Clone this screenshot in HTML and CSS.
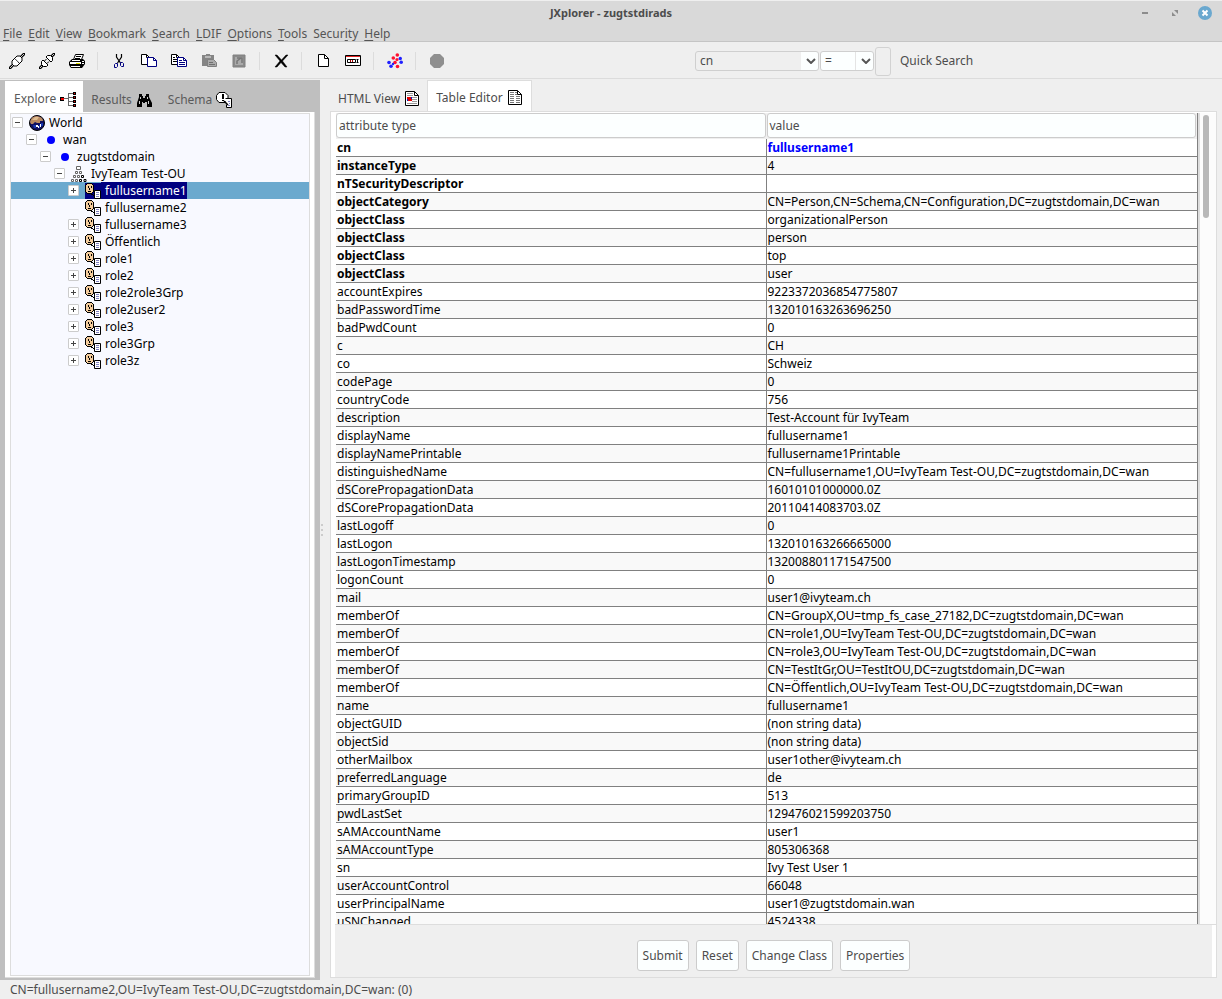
FILE: index.html
```html
<!DOCTYPE html>
<html lang="en">
<head>
<meta charset="utf-8">
<title>JXplorer - zugtstdirads</title>
<link rel="stylesheet" href="styles.css">
</head>
<body>
<svg class="sprites" aria-hidden="true">
  <symbol id="person" viewBox="0 0 16 16">
    <path d="M2 0h5v1h1v1h1v7h-1v1h-1v1h-5v-1h-1v-1h-1v-7h1v-1h1z" fill="#000"/>
    <path d="M2 1h5v1h1v7h-1v1h-5v-1h-1v-7h1z" fill="#f4cc9c"/>
    <path d="M3 3h1v2h-1zM6 3h1v2h-1zM4 5h1v2h-1zM3 8h3v1h-3zM6 11h2v1h-2zM8 12h1v1h-1z" fill="#000"/>
    <path d="M9.500 7.500h6v8h-6z" fill="#fff" stroke="#000"/>
    <path d="M11 9h3v1h-3zM11 11h3v1h-3zM11 13h3v1h-3z" fill="#8080c0"/>
  </symbol>
  <symbol id="globe" viewBox="0 0 16 16">
    <circle cx="8" cy="8" r="7.500" fill="#101060" stroke="#000"/>
    <path d="M1 7Q2 1 8 1Q14 2 14 6H11V8H8L6 7L4 9H2z" fill="#b98a62"/>
    <path d="M3 5L6 2H10L8 5z" fill="#e0bc90"/>
    <path d="M7 10h2v1h1v2h-1v-1h-2zM11 9h1v3h-1z" fill="#fff"/>
    <path d="M4 10h3v3h-2zM10 10h1v3h-1zM12 8h2v3h-2z" fill="#1838b0"/>
  </symbol>
  <symbol id="dot" viewBox="0 0 16 16"><circle cx="8" cy="8" r="4" fill="#00f"/></symbol>
  <symbol id="unit" viewBox="0 0 16 16">
    <g fill="#fff" stroke="#666"><path d="M5.500.5h4v3h-4zM4.500 5.500h2v2h-2zM8.500 5.500h2v2h-2zM2.500 9.500h2v2h-2zM6.500 9.500h2v2h-2zM.5 13.500h2v2h-2zM4.500 13.500h2v2h-2z"/></g>
    <g fill="#fff" stroke="#000"><path d="M10.500 9.500h2v2h-2zM13 13.500h2v2h-2zM8.500 13.500h2v2h-2z"/></g>
  </symbol>
  <symbol id="copy" viewBox="0 0 16 16">
    <path d="M.5 1.500h5l3 3v7h-8z" fill="#fff" stroke="#000"/><path d="M5.500 1.500v3h3" fill="none" stroke="#000"/>
    <path d="M6.500 4.500h6l3 3v6h-9z" fill="#fff" stroke="#000080"/><path d="M12.500 4.500v3h3" fill="none" stroke="#000080"/>
  </symbol>
</svg>

<header class="titlebar">
  <h1>JXplorer - zugtstdirads</h1>
  <div class="window-buttons">
    <button aria-label="Minimize"><svg viewBox="0 0 14 14"><path d="M4 6h6v2H4z" fill="#8c8c8c"/></svg></button>
    <button aria-label="Restore"><svg viewBox="0 0 14 14"><path d="M6 4h4v4zM4 6l4 4H4z" fill="#8c8c8c"/></svg></button>
    <button aria-label="Close"><svg viewBox="0 0 14 14"><circle cx="7" cy="7" r="7" fill="#6aa8cf"/><path d="M4.500 4.500l5 5M9.500 4.500l-5 5" stroke="#fff" stroke-width="2"/></svg></button>
  </div>
</header>
<nav class="menubar">
  <button><u>F</u>ile</button><button><u>E</u>dit</button><button><u>V</u>iew</button><button><u>B</u>ookmark</button><button><u>S</u>earch</button><button><u>L</u>DIF</button><button><u>O</u>ptions</button><button><u>T</u>ools</button><button>Secur<u>i</u>ty</button><button><u>H</u>elp</button>
</nav>

<div class="toolbar">
  <div class="tools">
    <button aria-label="Connect"><svg viewBox="0 0 16 16"><path d="M0 16L5 11M11 5L16 0" stroke="#000" stroke-width="2.800"/><path d="M1 15L5 11M11 5L15 1" stroke="#fff" stroke-width=".8"/><path d="M3 8L8 3H11L13 5V8L8 13H5L3 11z" fill="#fff" stroke="#000"/><path d="M5.500 5.500L10.500 10.500" stroke="#000"/><path d="M6.500 6L10 9.500" stroke="#bbb"/></svg></button>
    <button aria-label="Disconnect"><svg viewBox="0 0 16 16"><path d="M0 16L4 12M12 4L16 0" stroke="#000" stroke-width="2.800"/><path d="M1 15L4 12M12 4L15 1" stroke="#fff" stroke-width=".8"/><path d="M2.500 8.500L4 7L9 12L7.500 13.500H4.500L2.500 11.500zM7 4L8.500 2.500H11.500L13.500 4.500V7.500L12 9z" fill="#fff" stroke="#000"/><path d="M5.500 8L7.500 6M8 10.500L10 8.500" stroke="#000"/></svg></button>
    <button aria-label="Print"><svg viewBox="0 0 16 16"><path d="M4.500 6.500L6.500 1.500H14.500L12.500 6.500" fill="#fff" stroke="#000"/><path d="M7 3.500h5M6 5.500h5" stroke="#000"/><path d="M3 6h11l2 2v3l-3 4H2l-2-3V9z" fill="#000"/><path d="M3 7h8v1H3zM1 9h11v2H1zM2 13h9v1H2zM13 8h2v1h-2zM13 10h2v1h-2z" fill="#fff"/><path d="M7 10h4v1H7z" fill="#dddd00"/></svg></button>
    <i class="separator"></i>
    <button aria-label="Cut"><svg viewBox="0 0 16 16"><path d="M5.500 1v3l4 6M10.500 1v3l-4 6" fill="none" stroke="#000" stroke-width="1.200"/><path d="M4.500 10.500h2v3l-1 1h-2v-3zM9.500 9.500h2l1 1v3h-2l-1-1z" fill="none" stroke="#000080"/></svg></button>
    <button aria-label="Copy"><svg viewBox="0 0 16 16"><use href="#copy"/></svg></button>
    <button aria-label="Copy branch"><svg viewBox="0 0 16 16"><use href="#copy"/><path d="M2 4.500h2M2 6.500h4M2 8.500h4" stroke="#000"/><path d="M8 7.500h3M8 9.500h6M8 11.500h6" stroke="#000080"/></svg></button>
    <button aria-label="Paste"><svg viewBox="0 0 16 16"><path d="M1 2h4V1h4v1h4v11H1z" fill="#858585"/><path d="M4 3h6v2H4z" fill="#b8b8b8"/><path d="M6.500 6.500h6l3 3v4h-9z" fill="#aaa" stroke="#808080"/><path d="M8 9.500h4M8 11.500h6" stroke="#707070"/></svg></button>
    <button aria-label="Alias"><svg viewBox="0 0 16 16"><path d="M2 2h12v12H2z" fill="#8b8b8b" stroke="#808080"/><path d="M4 4h8v8H4z" fill="#aaa"/><path d="M6 11V8l4-3M6 5h5v5" fill="none" stroke="#777" stroke-width="1.500"/></svg></button>
    <i class="separator"></i>
    <button aria-label="Delete"><svg viewBox="0 0 16 16"><path d="M2 2h2l4.500 5L13 2h2L9.500 8L14 14h-2L8 9.500L4 14H2L7 8z" fill="#000" stroke="#000" stroke-width=".5"/></svg></button>
    <i class="separator"></i>
    <button aria-label="New"><svg viewBox="0 0 16 16"><path d="M3.500 1.500h6l4 4v8h-10z" fill="#fff" stroke="#000"/><path d="M9.500 1.500v4h4" fill="none" stroke="#000"/></svg></button>
    <button aria-label="Rename"><svg viewBox="0 0 16 16"><path d="M.5 2.500h15v10H.5z" fill="#fff" stroke="#000"/><path d="M1 3h14v1H1z" fill="#e02020"/><path d="M2.500 6.500h8v3h-8z" fill="#fff" stroke="#000"/><path d="M5.500 7v2M7.500 7v2" stroke="#a00"/><path d="M11.500 6.500h2M11.500 9.500h2M12.500 6v4" stroke="#000"/></svg></button>
    <i class="separator"></i>
    <button aria-label="Refresh"><svg viewBox="0 0 16 16"><g fill="#ff1030"><circle cx="10.300" cy="2" r="1.800"/><circle cx="6.300" cy="5" r="1.800"/><circle cx="10" cy="6.500" r="1.600"/><circle cx="8" cy="9.500" r="1.800"/><circle cx="10.500" cy="13.500" r="1.800"/></g><g fill="#2020ff"><circle cx="13.300" cy="5.500" r="1.700"/><circle cx="2" cy="9.500" r="1.800"/><circle cx="14.200" cy="9.300" r="1.800"/><circle cx="4" cy="13.300" r="1.800"/><circle cx="6" cy="11" r="1.200"/></g></svg></button>
    <i class="separator"></i>
    <button aria-label="Stop"><svg viewBox="0 0 16 16"><path d="M5 1h6l4 4v6l-4 4H5l-4-4V5z" fill="#8f8f8f"/></svg></button>
  </div>
  <div class="quick-search">
    <span class="combo attribute"><select aria-label="Search attribute"><option>cn</option></select><svg viewBox="0 0 10 6"><path d="M1 1l4 4l4-4" fill="none" stroke="#555" stroke-width="2"/></svg></span>
    <span class="combo operator"><select aria-label="Operator"><option>=</option></select><svg viewBox="0 0 10 6"><path d="M1 1l4 4l4-4" fill="none" stroke="#555" stroke-width="2"/></svg></span>
    <input class="search-value" type="text" id="quick">
    <label for="quick">Quick Search</label>
  </div>
</div>

<main class="workspace">
  <section class="browser">
    <div class="tabs">
      <button class="tab active">Explore <svg viewBox="0 0 18 16"><path d="M4 7.500h4M8.500 2v12M8 2.500h5M8 6.500h5M8 10.500h5M8 14.500h5" stroke="#666" fill="none"/><path d="M0 6h4v4H0zM13 1h3v3h-3zM13 5h3v3h-3zM13 9h3v3h-3zM13 13h3v3h-3z" fill="#000"/><path d="M1 7h3v2H1zM14 2h1v1h-1zM14 6h1v1h-1zM14 10h1v1h-1zM14 14h1v1h-1z" fill="#f00000"/></svg></button>
      <button class="tab">Results <svg viewBox="0 0 16 16"><path d="M3 2h3v2h1v2h2V4h1V2h3v3l3 6v4h-5v-5H9v1H7v-1H6v5H1v-4l2-6z" fill="#000"/><path d="M4 5h1v2H4zM3 9h1v3H3zM11 5h1v2h-1zM12 9h1v3h-1z" fill="#ccc"/></svg></button>
      <button class="tab">Schema <svg viewBox="0 0 16 16"><path d="M3 .5h6l3 3v4l-3 3H3l-2.500-3v-4z" fill="#fff" stroke="#000"/><path d="M6 2h2v5H6zM6 8h2v1H6z" fill="#000"/><path d="M9.500 6.500h6v9h-5v-3" fill="#fff" stroke="#000"/><path d="M8 9l4 4" stroke="#000" stroke-width="1.500"/><path d="M12 9.500h2M13 11.500h1M12 13.500h2" stroke="#8080c0"/></svg></button>
    </div>
    <div class="browser-body">
      <ul class="tree">
        <li><div class="node"><button class="toggle minus" aria-label="Collapse"></button><svg><use href="#globe"/></svg><span>World</span></div>
        <ul><li><div class="node"><button class="toggle minus" aria-label="Collapse"></button><svg><use href="#dot"/></svg><span>wan</span></div>
        <ul><li><div class="node"><button class="toggle minus" aria-label="Collapse"></button><svg><use href="#dot"/></svg><span>zugtstdomain</span></div>
        <ul><li><div class="node"><button class="toggle minus" aria-label="Collapse"></button><svg><use href="#unit"/></svg><span>IvyTeam Test-OU</span></div>
        <ul>
          <li><div class="node selected"><button class="toggle" aria-label="Expand"></button><svg><use href="#person"/></svg><span>fullusername1</span></div></li>
          <li><div class="node leaf"><svg><use href="#person"/></svg><span>fullusername2</span></div></li>
          <li><div class="node"><button class="toggle" aria-label="Expand"></button><svg><use href="#person"/></svg><span>fullusername3</span></div></li>
          <li><div class="node"><button class="toggle" aria-label="Expand"></button><svg><use href="#person"/></svg><span>Öffentlich</span></div></li>
          <li><div class="node"><button class="toggle" aria-label="Expand"></button><svg><use href="#person"/></svg><span>role1</span></div></li>
          <li><div class="node"><button class="toggle" aria-label="Expand"></button><svg><use href="#person"/></svg><span>role2</span></div></li>
          <li><div class="node"><button class="toggle" aria-label="Expand"></button><svg><use href="#person"/></svg><span>role2role3Grp</span></div></li>
          <li><div class="node"><button class="toggle" aria-label="Expand"></button><svg><use href="#person"/></svg><span>role2user2</span></div></li>
          <li><div class="node"><button class="toggle" aria-label="Expand"></button><svg><use href="#person"/></svg><span>role3</span></div></li>
          <li><div class="node"><button class="toggle" aria-label="Expand"></button><svg><use href="#person"/></svg><span>role3Grp</span></div></li>
          <li><div class="node"><button class="toggle" aria-label="Expand"></button><svg><use href="#person"/></svg><span>role3z</span></div></li>
        </ul></li></ul></li></ul></li></ul></li>
      </ul>
    </div>
  </section>

  <div class="divider"><svg viewBox="0 0 3 12"><path d="M0 0h2v2H0zM0 5h2v2H0zM0 10h2v2H0z" fill="#ccc"/></svg></div>

  <section class="editor">
    <div class="tabs">
      <button class="tab">HTML View <svg viewBox="0 0 16 16"><path d="M1.500.5h9l4 4v10h-13z" fill="#fff" stroke="#000"/><path d="M10.500.5v4h4" fill="none" stroke="#000"/><path d="M3 2.500h6M3 4.500h6M8 6.500h5M8 8.500h5M8 10.500h5M3 12.500h10" stroke="#999"/><path d="M3 6h5v4H3z" fill="#e00000"/><path d="M3 8h1v2H3zM7 6h1v2H7z" fill="#0020c0"/></svg></button>
      <button class="tab active">Table Editor <svg viewBox="0 0 16 16"><path d="M1.500.5h9l4 4v10h-13z" fill="#fff" stroke="#000"/><path d="M10.500.5v4h4" fill="none" stroke="#000"/><path d="M3 2.500h4M3 4.500h4M3 6.500h4M3 8.500h4M3 10.500h4M3 12.500h4M8 2.500h2M8 4.500h2M9 6.500h4M9 8.500h4M9 10.500h4M9 12.500h4" stroke="#777"/></svg></button>
    </div>
    <div class="editor-body">
      <div class="table-area">
        <div class="table-scroll">
          <table>
            <thead><tr><th><div>attribute type</div></th><th><div>value</div></th></tr></thead>
            <tbody>
              <tr class="required"><td>cn</td><td class="naming">fullusername1</td></tr>
              <tr class="required"><td>instanceType</td><td>4</td></tr>
              <tr class="required"><td>nTSecurityDescriptor</td><td></td></tr>
              <tr class="required"><td>objectCategory</td><td>CN=Person,CN=Schema,CN=Configuration,DC=zugtstdomain,DC=wan</td></tr>
              <tr class="required"><td>objectClass</td><td>organizationalPerson</td></tr>
              <tr class="required"><td>objectClass</td><td>person</td></tr>
              <tr class="required"><td>objectClass</td><td>top</td></tr>
              <tr class="required"><td>objectClass</td><td>user</td></tr>
              <tr><td>accountExpires</td><td>9223372036854775807</td></tr>
              <tr><td>badPasswordTime</td><td>132010163263696250</td></tr>
              <tr><td>badPwdCount</td><td>0</td></tr>
              <tr><td>c</td><td>CH</td></tr>
              <tr><td>co</td><td>Schweiz</td></tr>
              <tr><td>codePage</td><td>0</td></tr>
              <tr><td>countryCode</td><td>756</td></tr>
              <tr><td>description</td><td>Test-Account für IvyTeam</td></tr>
              <tr><td>displayName</td><td>fullusername1</td></tr>
              <tr><td>displayNamePrintable</td><td>fullusername1Printable</td></tr>
              <tr><td>distinguishedName</td><td>CN=fullusername1,OU=IvyTeam Test-OU,DC=zugtstdomain,DC=wan</td></tr>
              <tr><td>dSCorePropagationData</td><td>16010101000000.0Z</td></tr>
              <tr><td>dSCorePropagationData</td><td>20110414083703.0Z</td></tr>
              <tr><td>lastLogoff</td><td>0</td></tr>
              <tr><td>lastLogon</td><td>132010163266665000</td></tr>
              <tr><td>lastLogonTimestamp</td><td>132008801171547500</td></tr>
              <tr><td>logonCount</td><td>0</td></tr>
              <tr><td>mail</td><td>user1@ivyteam.ch</td></tr>
              <tr><td>memberOf</td><td>CN=GroupX,OU=tmp_fs_case_27182,DC=zugtstdomain,DC=wan</td></tr>
              <tr><td>memberOf</td><td>CN=role1,OU=IvyTeam Test-OU,DC=zugtstdomain,DC=wan</td></tr>
              <tr><td>memberOf</td><td>CN=role3,OU=IvyTeam Test-OU,DC=zugtstdomain,DC=wan</td></tr>
              <tr><td>memberOf</td><td>CN=TestItGr,OU=TestItOU,DC=zugtstdomain,DC=wan</td></tr>
              <tr><td>memberOf</td><td>CN=Öffentlich,OU=IvyTeam Test-OU,DC=zugtstdomain,DC=wan</td></tr>
              <tr><td>name</td><td>fullusername1</td></tr>
              <tr><td>objectGUID</td><td>(non string data)</td></tr>
              <tr><td>objectSid</td><td>(non string data)</td></tr>
              <tr><td>otherMailbox</td><td>user1other@ivyteam.ch</td></tr>
              <tr><td>preferredLanguage</td><td>de</td></tr>
              <tr><td>primaryGroupID</td><td>513</td></tr>
              <tr><td>pwdLastSet</td><td>129476021599203750</td></tr>
              <tr><td>sAMAccountName</td><td>user1</td></tr>
              <tr><td>sAMAccountType</td><td>805306368</td></tr>
              <tr><td>sn</td><td>Ivy Test User 1</td></tr>
              <tr><td>userAccountControl</td><td>66048</td></tr>
              <tr><td>userPrincipalName</td><td>user1@zugtstdomain.wan</td></tr>
              <tr><td>uSNChanged</td><td>4524338</td></tr>
            </tbody>
          </table>
        </div>
        <div class="scrollbar"><div class="thumb"></div></div>
      </div>
      <div class="actions">
        <button>Submit</button><button>Reset</button><button>Change Class</button><button>Properties</button>
      </div>
    </div>
  </section>
</main>
<footer class="status">CN=fullusername2,OU=IvyTeam Test-OU,DC=zugtstdomain,DC=wan: (0)</footer>
</body>
</html>
```
FILE: styles.css
```css
* { box-sizing: border-box; }
body {
  margin: 0;
  height: 100vh;
  display: flex;
  flex-direction: column;
  overflow: hidden;
  background: #efefef;
  color: #4c4c4c;
  font: 12px/16px "Noto Sans", sans-serif;
}
button, select, input { font: inherit; color: inherit; }
button { padding: 0; border: 0; background: none; }
svg { display: block; flex: none; }
ul { margin: 0; padding: 0; list-style: none; }
.sprites { display: none; }

.titlebar {
  display: grid;
  grid-template-columns: 1fr auto 1fr;
  align-items: center;
  height: 25px;
  flex: none;
  border-top: 1px solid #efefef;
  background: #d9d9d9;
}
.titlebar h1 { grid-column: 2; margin: 0; font-size: 11px; line-height: 16px; }
.window-buttons { display: flex; justify-content: flex-end; gap: 16px; padding-right: 10px; }
.window-buttons svg { width: 14px; height: 14px; }
.menubar {
  display: flex;
  align-items: flex-end;
  gap: 6px;
  height: 17px;
  flex: none;
  padding-left: 3px;
  background: #d9d9d9;
  border-bottom: 1px solid #c5c5c5;
}
.menubar button { line-height: 15px; color: #555; }
.menubar u { text-underline-offset: 2px; }

.toolbar {
  display: flex;
  align-items: center;
  height: 37px;
  padding-top: 2px;
  border-bottom: 1px solid #dcdcdc;
  flex: none;
}
.tools { display: flex; flex: 0 1 695px; padding-left: 2px; }
.tools button { width: 30px; height: 18px; display: grid; place-items: center; }
.tools svg { width: 16px; height: 16px; }
.separator { width: 12px; background: linear-gradient(#dcdcdc, #dcdcdc) 5px 0 / 1px 100% no-repeat; }
.quick-search { display: flex; align-items: center; gap: 1px; }
.quick-search label { padding-left: 8px; }
.combo { display: grid; align-items: center; height: 20px; }
.combo select {
  grid-area: 1 / 1;
  appearance: none;
  height: 20px;
  padding: 0 4px;
  border: 1px solid #cfcfcf;
  border-radius: 3px;
  background: linear-gradient(#e4e4e4, #e4e4e4) right 17px top / 1px 100% no-repeat #fcffff;
}
.combo svg { grid-area: 1 / 1; justify-self: end; width: 10px; height: 6px; margin-right: 3px; pointer-events: none; }
.attribute { width: 124px; }
.attribute select { background: linear-gradient(#fcffff, #fcffff) right top / 17px 100% no-repeat #efefef; }
.operator { width: 54px; }
.search-value { width: 16px; height: 29px; border: 1px solid #d2d2d2; border-radius: 3px; background: #efefef; }

.workspace { flex: 1; min-height: 0; display: flex; padding-top: 1px; }
.browser { width: 320px; flex: none; display: flex; flex-direction: column; padding: 0 5px 2px; background: #bfbfbf; }
.tabs { display: flex; align-items: flex-end; height: 32px; flex: none; }
.tab { display: flex; align-items: center; gap: 4px; height: 30px; padding: 0 9px; }
.tab svg { width: 16px; height: 16px; }
.browser .tab { padding: 6px 8px 0; color: #5a5a5a; }
.browser .tab.active { height: 31px; padding: 4px 5px 0 9px; }
.browser .tab.active svg { width: 18px; }
.tab.active { background: #fff; }
.browser-body { flex: 1; min-height: 0; padding: 1px 4px 1px 5px; background: #fff; border: solid #ddd; border-width: 0 1px 1px 0; }
.tree { height: 100%; border: 1px solid #ddd; background: #f8f9ff; color: #000; overflow: hidden; }

.node { display: flex; align-items: center; height: 17px; padding-left: 1px; }
.tree ul .node { padding-left: 15px; }
.tree ul ul .node { padding-left: 29px; }
.tree ul ul ul .node { padding-left: 43px; }
.tree ul ul ul ul .node { padding-left: 57px; }
.tree ul ul ul ul .leaf { padding-left: 74px; }
.node svg { width: 16px; height: 16px; }
.node span { padding: 0 0 0 4px; line-height: 17px; }
.toggle {
  flex: none;
  width: 11px;
  height: 11px;
  margin-right: 6px;
  border: 1px solid #ccc;
  border-radius: 1px;
  background:
    linear-gradient(#444, #444) center / 5px 1px no-repeat,
    linear-gradient(#444, #444) center / 1px 5px no-repeat,
    #fff;
}
.toggle.minus { background: linear-gradient(#444, #444) center / 5px 1px no-repeat, #fff; }
.selected { background: #6ba9ce; }
.selected svg, .selected span { background: #000080; color: #fff; }

.divider { width: 10px; flex: none; display: grid; align-items: center; padding-left: 1px; }
.divider svg { width: 3px; height: 12px; }
.editor { flex: 1; min-width: 0; display: flex; flex-direction: column; padding: 0 5px 2px 0; }
.editor .tabs { height: 31px; }
.editor .tab { padding: 7px 7px 0 8px; height: 31px; }
.editor .tab.active { padding: 4px 8px 0; border: 1px solid #ddd; border-bottom: 0; }
.editor-body {
  flex: 1;
  min-height: 0;
  display: flex;
  flex-direction: column;
  padding: 1px 0 0 4px;
  border: 1px solid #ddd;
  background: #fff;
}
.table-area { flex: 1; min-height: 0; display: flex; border-bottom: 1px solid #ddd; }
.table-scroll { flex: 1; overflow: hidden; padding-left: 1px; border-right: 2px solid #ddd; background: #fff; }
table { width: 100%; table-layout: fixed; border-collapse: separate; border-spacing: 0; border-right: 1px solid #808080; color: #000; }
th { padding: 0 1px 1px 0; background: #efefef; font-weight: 400; text-align: left; color: #4c4c4c; }
th div { height: 25px; padding: 0 2px; line-height: 23px; border: 1px solid #ccc; border-radius: 3px; background: #fcffff; }
td { height: 18px; padding: 0 1px; line-height: 17px; border-bottom: 1px solid #808080; white-space: nowrap; overflow: hidden; }
td:first-child { border-right: 1px solid #808080; }
tbody tr:nth-child(even) { background: #f9f9f9; }
.required td:first-child, .naming { font-weight: 700; }
.naming { color: #00f; }
.scrollbar { width: 16px; padding: 2px 0 0 3px; background: #fcfcfc; }
.thumb { width: 6px; height: 103px; border-radius: 3px; background: #b8b8b8; }
.actions { display: flex; justify-content: center; gap: 7px; height: 52px; padding: 15px 0 6px; margin-right: 4px; background: #efefef; }
.actions button { padding: 0 5px; border: 1px solid #ccc; border-radius: 3px; background: #fcffff; }
.status { flex: none; height: 19px; padding: 0 10px; line-height: 19px; }
```
